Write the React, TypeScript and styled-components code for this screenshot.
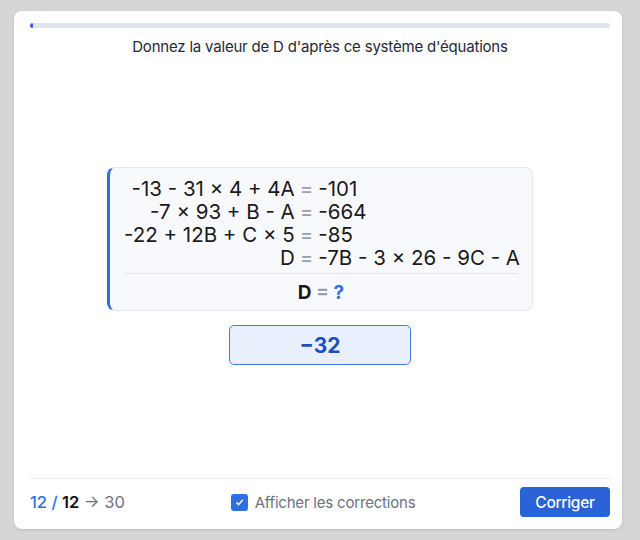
import { createGlobalStyle } from "styled-components";
import styled from "styled-components";

const GlobalStyle = createGlobalStyle`
  html, body {
    margin: 0;
    padding: 0;
    background: #d6d6d6;
    font-family: Inter, "Noto Sans", sans-serif;
  }
`;

const Page = styled.div`
  width: 640px;
  height: 540px;
  padding: 11px 18px 11px 14px;
  box-sizing: border-box;
`;

const Card = styled.div`
  height: 100%;
  background: #fff;
  border-radius: 8px;
  box-shadow: 0 1px 3px rgba(0, 0, 0, 0.12);
  padding: 12px 12px 12px 16px;
  box-sizing: border-box;
  display: flex;
  flex-direction: column;
`;

const Progress = styled.div`
  height: 5px;
  border-radius: 3px;
  background: #dfe4ee;
  overflow: hidden;
`;

const ProgressFill = styled.div`
  height: 100%;
  background: #2563eb;
  border-radius: 3px;
`;

const Question = styled.h1`
  margin: 9px 0 0;
  font-size: 15px;
  font-weight: 400;
  line-height: 20px;
  letter-spacing: -0.2px;
  text-align: center;
  color: #1f2937;
`;

const Main = styled.main`
  flex: 1;
  display: flex;
  flex-direction: column;
  align-items: center;
  justify-content: center;
  gap: 14px;
  padding-bottom: 3px;
`;

const SystemBox = styled.div`
  width: 426px;
  box-sizing: border-box;
  background: #f8f9fc;
  border: 1px solid #e2e6ee;
  border-left: 3px solid #2f6fe4;
  border-radius: 8px;
  padding: 9px 14px 5px 14px;
`;

const Equations = styled.div`
  display: grid;
  grid-template-columns: auto auto 1fr;
  column-gap: 5px;
  font-size: 20.5px;
  line-height: 23px;
  color: #1a1a1a;
`;

const Lhs = styled.span`
  text-align: right;
  white-space: pre;
`;

const Eq = styled.span`
  color: #9aa1ad;
`;

const Rhs = styled.span`
  white-space: pre;
`;

const Rule = styled.hr`
  border: none;
  border-top: 1px solid #e1e4ea;
  margin: 4px 0 7px;
`;

const Unknown = styled.div`
  text-align: center;
  font-size: 19px;
  font-weight: 700;
  line-height: 24px;
  color: #1a1a1a;
`;

const Tone = styled.span<{ $c: string; $w?: number }>`
  color: ${(p) => p.$c};
  font-weight: ${(p) => p.$w ?? "inherit"};
`;

const Answer = styled.div`
  width: 182px;
  height: 40px;
  box-sizing: border-box;
  background: #e8effd;
  border: 1.5px solid #3b7cf0;
  border-radius: 5px;
  display: flex;
  align-items: center;
  justify-content: center;
  font-size: 21px;
  font-weight: 700;
  color: #1d4fc4;
`;

const Footer = styled.footer`
  border-top: 1px solid #eceef2;
  padding-top: 8px;
  display: grid;
  grid-template-columns: 1fr auto 1fr;
  align-items: center;
`;

const Score = styled.div`
  font-size: 16.5px;
  color: #6b7280;
`;

const Check = styled.label`
  display: flex;
  align-items: center;
  gap: 7px;
  font-size: 15px;
  letter-spacing: -0.2px;
  color: #6b7280;
  padding-left: 6px;
`;

const Box = styled.span`
  width: 17px;
  height: 17px;
  border-radius: 3px;
  background: #2f6fe4;
  display: flex;
  align-items: center;
  justify-content: center;
`;

const Button = styled.button`
  justify-self: end;
  width: 90px;
  height: 30px;
  border: none;
  border-radius: 4px;
  background: #2a62d8;
  color: #fff;
  font-family: inherit;
  font-size: 15.5px;
  font-weight: 500;
  letter-spacing: -0.3px;
`;

const rows: [string, string][] = [
  ["-13 - 31 × 4 + 4A", "-101"],
  ["-7 × 93 + B - A", "-664"],
  ["-22 + 12B + C × 5", "-85"],
  ["D", "-7B - 3 × 26 - 9C - A"],
];

export default function App() {
  const done = 1;
  const total = 30;
  return (
    <>
      <GlobalStyle />
      <Page>
        <Card>
          <Progress>
            <ProgressFill style={{ width: `${(done / total) * 100 * 0.15}%` }} />
          </Progress>
          <Question>Donnez la valeur de D d'après ce système d'équations</Question>
          <Main>
            <SystemBox>
              <Equations>
                {rows.map(([l, r]) => (
                  <>
                    <Lhs>{l}</Lhs>
                    <Eq>=</Eq>
                    <Rhs>{r}</Rhs>
                  </>
                ))}
              </Equations>
              <Rule />
              <Unknown>
                D <Tone $c="#9aa1ad">=</Tone> <Tone $c="#2f6fe4">?</Tone>
              </Unknown>
            </SystemBox>
            <Answer>−32</Answer>
          </Main>
          <Footer>
            <Score>
              <Tone $c="#2f6fe4" $w={500}>12 / </Tone>
              <Tone $c="#111" $w={600}>12</Tone> → 30
            </Score>
            <Check>
              <Box>
                <svg width="11" height="11" viewBox="0 0 12 12" fill="none">
                  <path d="M3 6.3l2 2.2L9.2 3.6" stroke="#fff" strokeWidth="1.5" strokeLinecap="round" strokeLinejoin="round" />
                </svg>
              </Box>
              Afficher les corrections
            </Check>
            <Button>Corriger</Button>
          </Footer>
        </Card>
      </Page>
    </>
  );
}
